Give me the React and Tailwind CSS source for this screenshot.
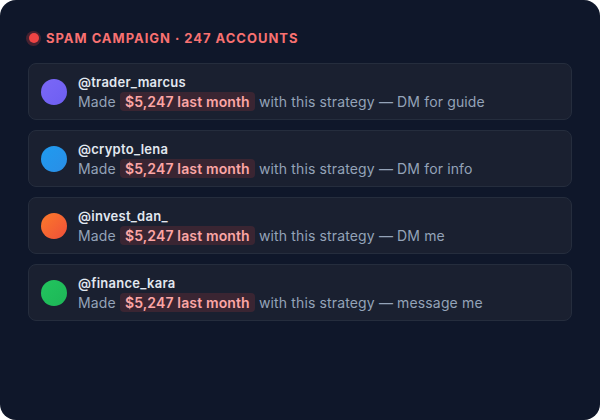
export default function App() {
  const rows = [
    { name: "@trader_marcus", tail: "DM for guide", av: "bg-[linear-gradient(135deg,#7b68f6,#6d5ef2)]" },
    { name: "@crypto_lena", tail: "DM for info", av: "bg-[linear-gradient(135deg,#1f9bf0,#2a8ee6)]" },
    { name: "@invest_dan_", tail: "DM me", av: "bg-[linear-gradient(135deg,#fb7a2a,#ef4f3a)]" },
    { name: "@finance_kara", tail: "message me", av: "bg-[linear-gradient(135deg,#22c55e,#1db657)]" },
  ];
  return (
    <div className="w-[600px] h-[420px] bg-white">
      <div
        className="w-full h-full rounded-2xl bg-[#0f172a] px-7 pt-7"
        style={{ fontFamily: "Inter, 'Noto Sans', sans-serif" }}
      >
        <div className="flex items-center h-5 gap-[5px] ml-[-2px]">
          <span className="w-[15px] h-[15px] rounded-full bg-[#ef4444]/25 flex items-center justify-center">
            <span className="w-[10px] h-[10px] rounded-full bg-[#ef4444]" />
          </span>
          <span className="text-[13px] font-bold tracking-[0.075em] text-[#f87171] leading-5">
            SPAM CAMPAIGN · 247 ACCOUNTS
          </span>
        </div>
        <div className="mt-[15px] flex flex-col gap-[10px]">
          {rows.map((r) => (
            <div
              key={r.name}
              className="h-[57px] rounded-lg border border-[#252d3d] bg-[#1a2030] flex items-center pl-3 gap-[11px]"
            >
              <div className={`w-[26px] h-[26px] rounded-full shrink-0 ${r.av}`} />
              <div className="flex flex-col mt-[2px]">
                <div className="text-[13px] font-semibold text-[#e2e8f0] leading-[17px] tracking-[0.02em]">{r.name}</div>
                <div className="text-[14px] text-[#94a3b8] leading-[20px] mt-[1px] tracking-[0.01em]">
                  Made{" "}
                  <span className="bg-[#ef4444]/15 text-[#fca5a5] font-semibold rounded px-[5px] py-[1px]">
                    $5,247 last month
                  </span>{" "}
                  with this strategy — {r.tail}
                </div>
              </div>
            </div>
          ))}
        </div>
      </div>
    </div>
  );
}
